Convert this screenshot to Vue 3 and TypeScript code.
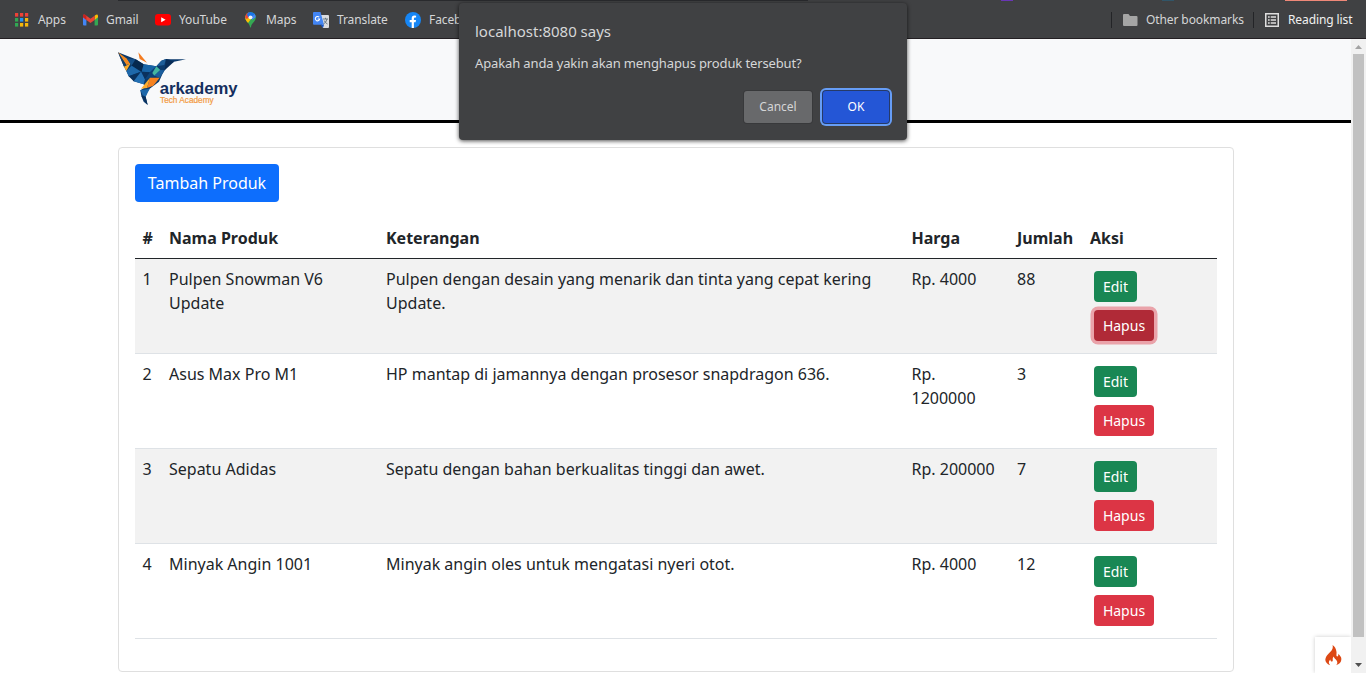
<script setup lang="ts">
interface Product {
  name: string
  description: string
  price: string
  stock: number
}

const products: Product[] = [
  { name: 'Pulpen Snowman V6 Update', description: 'Pulpen dengan desain yang menarik dan tinta yang cepat kering Update.', price: 'Rp. 4000', stock: 88 },
  { name: 'Asus Max Pro M1', description: 'HP mantap di jamannya dengan prosesor snapdragon 636.', price: 'Rp. 1200000', stock: 3 },
  { name: 'Sepatu Adidas', description: 'Sepatu dengan bahan berkualitas tinggi dan awet.', price: 'Rp. 200000', stock: 7 },
  { name: 'Minyak Angin 1001', description: 'Minyak angin oles untuk mengatasi nyeri otot.', price: 'Rp. 4000', stock: 12 },
]

const appDots = [
  '#ee4237', '#ee4237', '#ee4237',
  '#31a853', '#2196f3', '#f5b70b',
  '#31a853', '#f5b70b', '#f5b70b',
]
</script>

<template>
  <div class="window">
    <nav class="bookmarks">
      <i class="tab-edge"></i><i class="tab-purple"></i><i class="tab-teal"></i><i class="tab-coral"></i>
      <a class="bm apps">
        <svg width="14" height="14" viewBox="0 0 14 14">
          <rect v-for="(c, i) in appDots" :key="i" :x="(i % 3) * 5" :y="Math.floor(i / 3) * 5" width="3.2" height="3.6" :fill="c" />
        </svg>
        <span>Apps</span>
      </a>
      <a class="bm gmail">
        <svg width="15" height="12" viewBox="0 0 15 12">
          <path d="M0 2v8.5Q0 11.5 1 11.5H3.4V4z" fill="#4285f4" />
          <path d="M15 2v8.5Q15 11.5 14 11.5H11.6V4z" fill="#34a853" />
          <path d="M11.6 1.8 13 .7Q15 0 15 2V3.3L11.6 6z" fill="#fbbc04" />
          <path d="M0 3.3V2Q0 0 2 .7L7.5 4.8 11.6 1.8V6L7.5 9 3.4 6z" fill="#ea4335" />
          <path d="M0 3.3V2Q0 0 2 .7L3.4 1.8V6z" fill="#c5221f" />
        </svg>
        <span>Gmail</span>
      </a>
      <a class="bm youtube">
        <svg width="16" height="12" viewBox="0 0 16 12">
          <rect width="16" height="11.6" rx="3" fill="#f00" />
          <path d="M6.2 3.3v5L10.6 5.8z" fill="#fff" />
        </svg>
        <span>YouTube</span>
      </a>
      <a class="bm maps">
        <svg width="11" height="16" viewBox="0 0 11 16">
          <defs><clipPath id="pin"><path d="M5.5 0A5.3 5.3 0 0 0 .2 5.4C.2 9.5 4.5 10.5 5 15Q5.5 16 6 15C6.5 10.5 10.8 9.5 10.8 5.4A5.3 5.3 0 0 0 5.5 0z" /></clipPath></defs>
          <g clip-path="url(#pin)">
            <rect width="11" height="16" fill="#34a853" />
            <path d="M0 4 5 6 9 3 3 11 0 10z" fill="#fbbc04" />
            <path d="M0 0H4L5 4 2 7 0 6z" fill="#ea4335" />
            <path d="M3 0H11V2L5 7 2 3z" fill="#1a73e8" />
            <path d="M11 1V5L7 8 6 5z" fill="#4285f4" />
          </g>
          <circle cx="5.5" cy="5.3" r="1.9" fill="#f1f3f4" />
        </svg>
        <span>Maps</span>
      </a>
      <a class="bm translate">
        <svg width="17" height="16" viewBox="0 0 17 16">
          <path d="M6 3h9q1 0 1 1v11q0 1-1 1H10z" fill="#dadce0" />
          <path d="M1 0H7.5L11 12.8H1Q0 12.8 0 12V1Q0 0 1 0z" fill="#4285f4" />
          <path d="M7.5 12.8H11L10 16z" fill="#1a56c4" />
          <path d="M6.2 5.2A2.2 2.2 0 1 0 6.700 7H4.7" fill="none" stroke="#fff" stroke-width="1.1" />
          <path d="M10 7h5M12.5 5.8V7M14 7q-.8 3.5-3.5 5M11.2 8.5q1 2.5 3.3 3.5" fill="none" stroke="#5f6f7a" stroke-width=".9" />
        </svg>
        <span>Translate</span>
      </a>
      <a class="bm facebook">
        <svg width="16" height="16" viewBox="0 0 16 16">
          <circle cx="8" cy="8" r="8" fill="#1686f5" />
          <path d="M6.7 16V10.3H4.7V8H6.7V6.3Q6.7 3.5 9.4 3.5L11.1 3.7V5.6H10Q8.9 5.6 8.9 6.7V8H11L10.6 10.3H8.9V16z" fill="#fff" />
        </svg>
        <span>Facebook</span>
      </a>
      <div class="bm-right">
        <i class="sep"></i>
        <svg class="folder" width="15" height="13" viewBox="0 0 15 13"><path d="M1 0H5.5L7 2H13.5Q14.5 2 14.5 3V11Q14.5 12 13.5 12H1Q0 12 0 11V1Q0 0 1 0z" fill="#a5a5a5" /></svg>
        <span class="other">Other bookmarks</span>
        <i class="sep"></i>
        <svg class="list" width="14" height="14" viewBox="0 0 14 14">
          <rect x=".75" y=".75" width="12.5" height="12.5" fill="none" stroke="#dedede" stroke-width="1.5" />
          <path d="M3 4H4.7M3 7H4.7M3 10H4.7M5.7 4H11M5.7 7H11M5.7 10H11" stroke="#dedede" stroke-width="1.5" />
        </svg>
        <span class="reading">Reading list</span>
      </div>
    </nav>

    <div class="viewport">
      <div class="page">
        <header class="header">
          <svg class="logo" width="124" height="60" viewBox="24 30 372 180">
            <g transform="translate(15 15)">
              <path d="M9 22 62 43 86 58 124 64 139 47 153 42 168 43 213 43 177 50 162 59 149 76 142 88 132 110 104 131 96 143 92 155 98 180 86 170 79 153 76 136 90 127 86 118 56 109 50 98 41 94 34 78 27 65z" fill="#0b3a6c" />
              <path d="M9 22 36 41 46 56 34 60z" fill="#f28a20" />
              <path d="M9 22 34 60 27 65z" fill="#173f67" />
              <path d="M27 65 47 55 34 78z" fill="#fbab28" />
              <path d="M36 41 62 43 50 62z" fill="#154f88" />
              <path d="M62 43 86 58 80 80 50 62z" fill="#06294f" />
              <path d="M34 78 50 62 78 80 41 94z" fill="#1e68aa" />
              <path d="M41 94 78 80 56 109z" fill="#0a315d" />
              <path d="M56 109 78 80 90 103 86 118z" fill="#2470b3" />
              <path d="M70 22 96 53 74 42z" fill="#f47c20" />
              <path d="M86 58 124 64 105 82 80 80z" fill="#1764a6" />
              <path d="M80 80 105 82 90 103z" fill="#0a315d" />
              <path d="M105 82 124 64 118 96 90 103z" fill="#0c4278" />
              <path d="M124 64 136 75 118 92 112 84z" fill="#43b6a1" />
              <path d="M136 75 149 76 134 98 118 92z" fill="#1a5e9d" />
              <path d="M139 47 153 42 148 60 124 64z" fill="#1d5d98" />
              <path d="M153 42 177 50 149 76z" fill="#082c57" />
              <path d="M105 98 134 98 115 122 96 129z" fill="#f58220" />
              <path d="M105 98 96 129 78 131z" fill="#fdac2d" />
              <path d="M76 136 104 131 92 155 83 151z" fill="#1d68aa" />
              <path d="M79 153 92 155 98 180z" fill="#0a315d" />
            </g>
            <text class="brand" x="149" y="162" textLength="234" lengthAdjust="spacingAndGlyphs">arkademy</text>
            <text class="tagline" x="150" y="190" textLength="161" lengthAdjust="spacingAndGlyphs">Tech Academy</text>
          </svg>
        </header>

        <main class="card">
          <button class="btn primary">Tambah Produk</button>
          <table>
            <colgroup><col class="c-no"><col class="c-name"><col class="c-desc"><col class="c-price"><col class="c-stock"><col></colgroup>
            <thead>
              <tr><th>#</th><th>Nama Produk</th><th>Keterangan</th><th>Harga</th><th>Jumlah</th><th>Aksi</th></tr>
            </thead>
            <tbody>
              <tr v-for="(p, i) in products" :key="p.name">
                <td>{{ i + 1 }}</td>
                <td>{{ p.name }}</td>
                <td>{{ p.description }}</td>
                <td>{{ p.price }}</td>
                <td>{{ p.stock }}</td>
                <td>
                  <div class="actions">
                    <button class="btn small edit">Edit</button>
                    <button class="btn small delete" :class="{ focused: i === 0 }">Hapus</button>
                  </div>
                </td>
              </tr>
            </tbody>
          </table>
        </main>
      </div>
      <div class="scrollbar">
        <svg width="15" height="14" viewBox="0 0 15 14"><path d="M4 10 7.5 6 11 10z" fill="#a3a3a3" /></svg>
        <div class="thumb"></div>
        <svg class="down" width="15" height="16" viewBox="0 0 15 16"><path d="M4 6H11L7.5 10z" fill="#505050" /></svg>
      </div>
    </div>

    <div class="debug">
      <svg width="17" height="21" viewBox="0 0 17 21">
        <path d="M7.5 0C8.6 4 6.5 5.6 3.5 8.7C-.8 13-1.2 18 5.2 20.3C3.4 18.3 3.3 16.3 5.3 14.5C5.5 16.3 6.3 16.8 7.2 16.5C8.6 15.5 6.7 13.6 8.8 11.5C9 14 12.3 14.7 12.3 17.4C12.3 18.7 11.7 19.6 10.8 20.3C15.5 19 17.3 15.3 15.9 12C15.3 10.7 14.2 9.7 13.2 8.7C13.5 10.3 13.3 11.1 12.3 11.6C10.8 11.5 11.7 9 11.5 7C11.1 4 9.8 1.3 7.5 0z" fill="#dd4814" />
      </svg>
    </div>

    <div class="dialog">
      <div class="dialog-title">localhost:8080 says</div>
      <div class="dialog-text">Apakah anda yakin akan menghapus produk tersebut?</div>
      <div class="dialog-actions">
        <button class="cancel">Cancel</button>
        <button class="ok">OK</button>
      </div>
    </div>
  </div>
</template>

<style>
body { overflow: hidden; }
</style>

<style scoped>
* { box-sizing: border-box; }
.window {
  position: relative;
  display: flex;
  flex-direction: column;
  width: 1366px;
  height: 673px;
  overflow: hidden;
  background: #fff;
  color: #212529;
  font: 16px/24px "Noto Sans", sans-serif;
}
button { font-family: inherit; }
svg { display: block; flex: none; }

.bookmarks {
  position: relative;
  display: flex;
  align-items: center;
  flex: none;
  height: 39px;
  padding: 1px 14px 0 15px;
  background: #404143;
  border-bottom: 1px solid #231f23;
  color: #d5d6d7;
  font-size: 12px;
  line-height: 16px;
  letter-spacing: -.1px;
  white-space: nowrap;
}
.tab-edge, .tab-purple, .tab-teal, .tab-coral { position: absolute; top: 0; height: 1px; }
.tab-edge { left: 118px; width: 690px; background: #292a2d; }
.tab-purple { left: 1001px; width: 12px; background: #6936b5; }
.tab-teal { left: 1162px; width: 12px; background: #315568; }
.tab-coral { left: 1285px; width: 62px; background: #ef8878; }
.bm { display: flex; align-items: center; flex: none; }
.apps { width: 68px; gap: 9px; }
.gmail { width: 72px; gap: 8px; }
.youtube { width: 90px; gap: 8px; }
.maps { width: 68px; gap: 10px; }
.translate { width: 92px; gap: 7px; }
.facebook { gap: 8px; }
.bm-right { display: flex; align-items: center; margin-left: auto; }
.sep { width: 1px; height: 16px; background: #232427; }
.folder { margin: 1px 8px 0 11px; }
.other { width: 97px; margin-right: 10px; }
.list { margin: 0 9px 0 11px; }
.reading { width: 64px; color: #f1f1f1; }

.viewport { display: flex; flex: 1; min-height: 0; }
.page { flex: 1; overflow: hidden; }
.header {
  height: 84px;
  padding: 11px 0 0 118px;
  background: #f8f9fa;
  border-bottom: 3px solid #000;
}
.brand { font: bold 50px "Liberation Sans", sans-serif; fill: #142f5e; }
.tagline { font: 25px "Liberation Sans", sans-serif; fill: #f39b43; stroke: #f39b43; stroke-width: .6px; }

.card {
  width: 1116px;
  height: 525px;
  margin: 24px 0 0 118px;
  padding: 16px;
  border: 1px solid #dfdfdf;
  border-radius: 4px;
}
.btn { display: block; border: 0; border-radius: 4px; color: #fff; }
.primary { width: 144px; height: 38px; padding: 0; background: #0d6efd; font-size: 16px; line-height: 24px; }
table { width: 1082px; margin-top: 16px; table-layout: fixed; border-collapse: separate; border-spacing: 0; }
.c-no { width: 26px; }
.c-name { width: 217px; }
.c-desc { width: 525.5px; }
.c-price { width: 105.5px; }
.c-stock { width: 73px; }
th, td { padding: 8px; text-align: left; vertical-align: top; }
th:first-child, td:first-child { padding-left: 7.5px; }
th { border-bottom: 1px solid #212529; white-space: nowrap; }
td { height: 95px; border-bottom: 1px solid #dee2e6; }
tbody tr:nth-child(odd) { background: #f2f2f2; }
.actions { display: flex; flex-direction: column; align-items: flex-start; gap: 8px; padding: 4px; }
.small { height: 31px; padding: 0; font-size: 14px; line-height: 21px; }
.edit { width: 43px; background: #198754; }
.delete { width: 60px; background: #dc3545; }
.focused { background: #b02a37; box-shadow: 0 0 0 3.5px rgba(225, 83, 97, .5); }

.scrollbar { display: flex; flex-direction: column; align-items: center; width: 15px; background: #f1f1f1; }
.thumb { width: 11px; height: 583px; background: #c1c1c1; margin-top: 1px; }
.down { margin-top: auto; }

.debug {
  position: absolute;
  right: 15px;
  bottom: 0;
  display: flex;
  justify-content: center;
  width: 36px;
  height: 36px;
  padding-top: 8px;
  background: #fff;
  box-shadow: 0 0 4px #ccc;
  clip-path: inset(-5px 0 0 -5px);
}

.dialog {
  position: absolute;
  left: 459px;
  top: 3px;
  width: 448px;
  height: 137px;
  padding: 16px 16px;
  border-radius: 4px;
  background: #404143;
  box-shadow: 0 1px 4px rgba(0, 0, 0, .7);
  color: #d6d7d8;
}
.dialog-title { font-size: 15px; line-height: 24px; }
.dialog-text { margin-top: 10px; font-size: 13px; line-height: 20px; letter-spacing: -.13px; }
.dialog-actions { display: flex; justify-content: flex-end; gap: 10px; margin-top: 18px; }
.dialog-actions button { height: 32px; padding: 0; border: 0; border-radius: 3px; font-size: 12px; line-height: 16px; }
.dialog-actions .cancel { width: 68px; background: #68696b; color: #d4d5d6; box-shadow: 0 0 0 1px #38393b; }
.dialog-actions .ok { width: 66px; margin: 0 2px 0 1px; background: #2456d6; color: #fff; box-shadow: 0 0 0 1px #263a68, 0 0 0 3px #669df6; }
</style>
